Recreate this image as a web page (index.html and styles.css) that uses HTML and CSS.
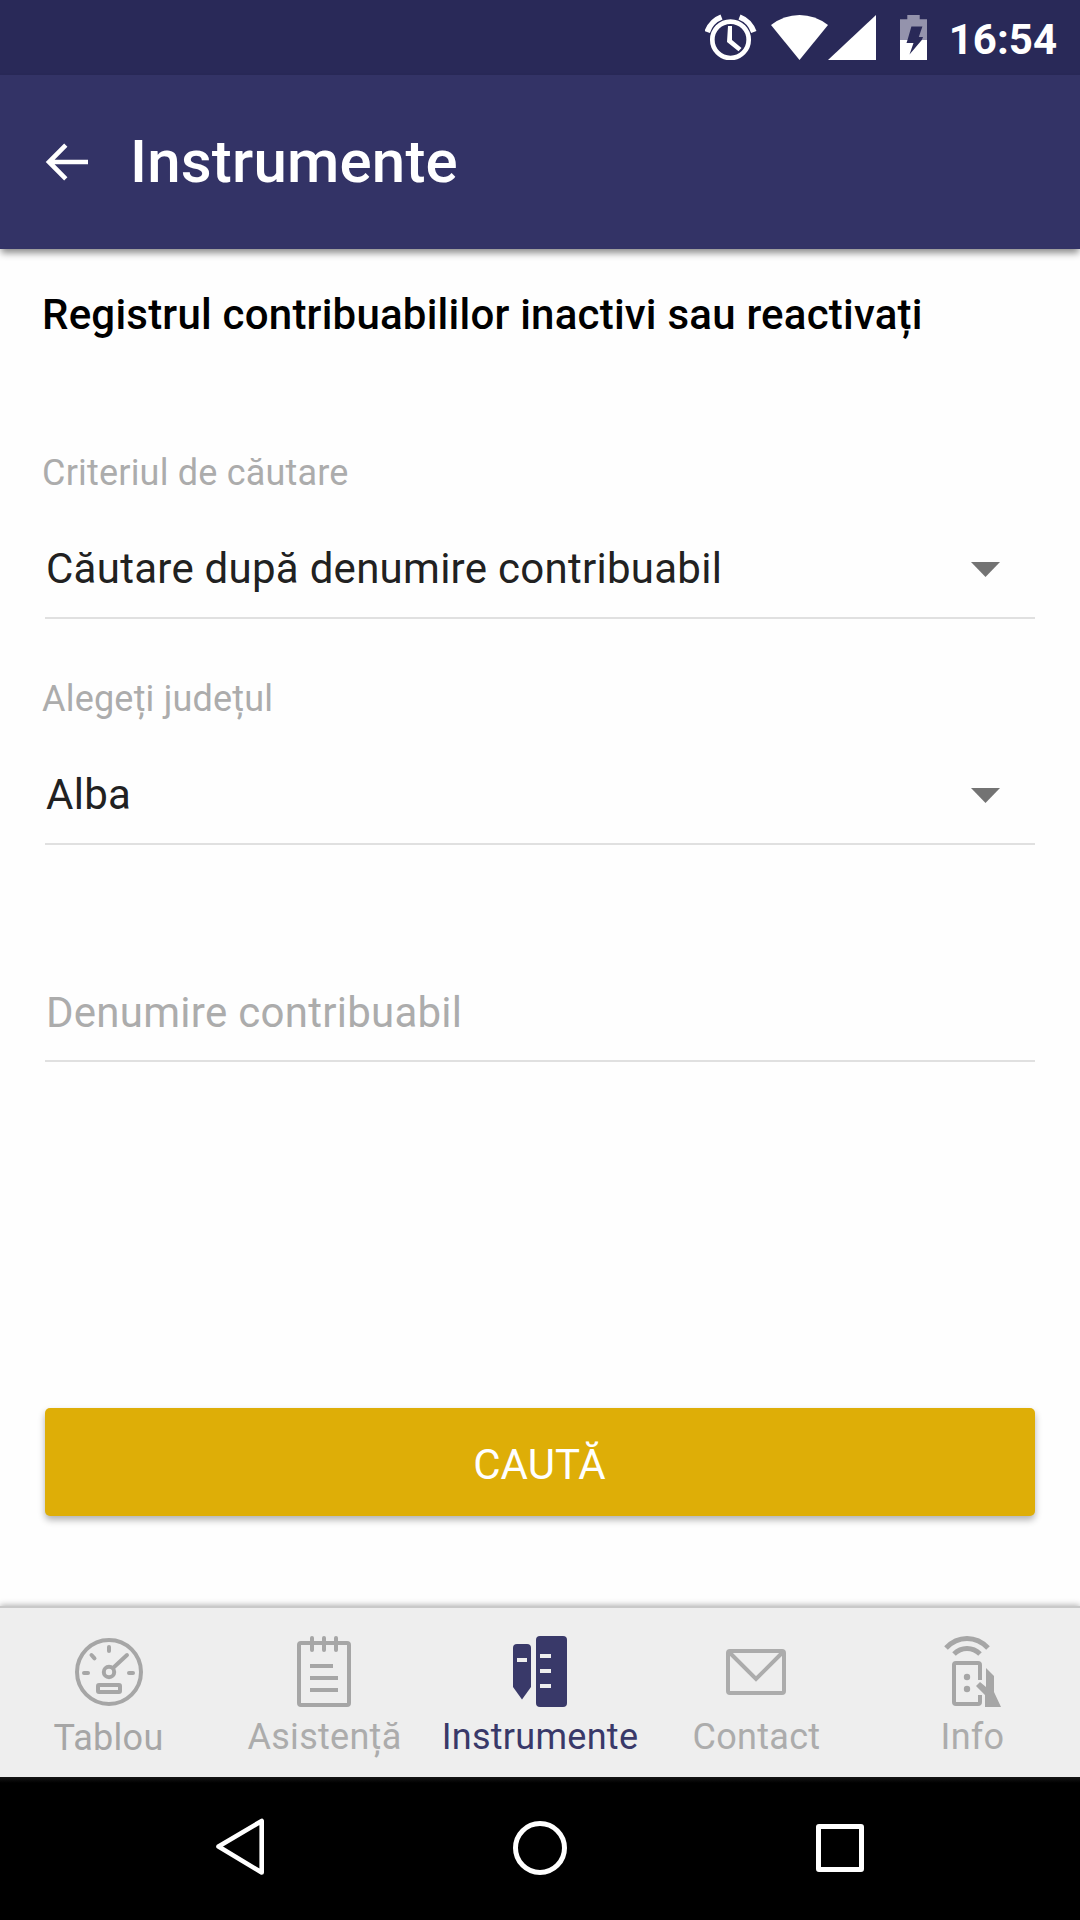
FILE: index.html
```html
<!DOCTYPE html>
<html lang="ro">
<head>
<meta charset="utf-8">
<title>Instrumente</title>
<link rel="stylesheet" href="styles.css">
</head>
<body>
<div class="status-bar">
  <svg class="status-icons" width="224" height="46" viewBox="705 14 224 46" aria-hidden="true">
    <circle cx="730.5" cy="39.8" r="18.2" fill="none" stroke="#fff" stroke-width="4.7"/>
    <path d="M728 26h4v14l9.500 8-3 3.200L727 42z" fill="#fff"/>
    <path d="M707.200 32Q711 21 721.500 17M753.800 32Q750 21 739.500 17" fill="none" stroke="#fff" stroke-width="5.600"/>
    <path d="M771 25Q784 15 799.500 15T828 25L799.500 60z" fill="#fff"/>
    <path d="M828 60h48V15z" fill="#fff"/>
    <path d="M900 40V19.300h7.300V15h12.400v4.300H927V40h-5.200l1.200-3h-4.200l3.600-10.500h-11L907.500 40z" fill="#9493ac"/>
    <path d="M900 40h7.500l-1 3h7l-4 11.500L921.800 40H927v20h-27z" fill="#fff"/>
  </svg>
  <span class="clock">16:54</span>
</div>
<header class="app-bar">
  <svg width="44" height="40" viewBox="45 142 44 40" aria-hidden="true">
    <path d="M88 162H49M65.800 145.200L49 162l16.800 16.800" fill="none" stroke="#fff" stroke-width="4.600"/>
  </svg>
  <h1 class="title">Instrumente</h1>
</header>
<main class="content">
  <h2 class="heading">Registrul contribuabililor inactivi sau reactivați</h2>
  <div class="label">Criteriul de căutare</div>
  <div class="field">
    <span>Căutare după denumire contribuabil</span>
    <svg class="caret" width="30" height="15" viewBox="0 0 30 15"><path d="M0 0h29L14.500 15z" fill="#737373"/></svg>
  </div>
  <div class="label">Alegeți județul</div>
  <div class="field">
    <span>Alba</span>
    <svg class="caret" width="30" height="15" viewBox="0 0 30 15"><path d="M0 0h29L14.500 15z" fill="#737373"/></svg>
  </div>
  <div class="field field-name"><span>Denumire contribuabil</span></div>
  <button class="search">CAUTĂ</button>
</main>
<nav class="tabs">
  <a class="tab tab-first">
    <svg width="76" height="80" viewBox="70 1632 76 80" fill="none" stroke="#a6a6a6" stroke-width="4" stroke-linecap="round">
      <circle cx="109" cy="1672" r="32"/>
      <circle cx="109" cy="1672" r="5.200"/>
      <path d="M113 1668l14-13M109 1647v4M91.500 1655l3 3.300M84 1673h4M129 1673h4"/>
      <rect x="98" y="1685" width="22" height="7" rx="1"/>
    </svg>
    <span>Tablou</span>
  </a>
  <a class="tab">
    <svg width="76" height="80" viewBox="286 1632 76 80" fill="none" stroke="#a6a6a6" stroke-width="4">
      <rect x="299" y="1643" width="50" height="62" rx="2"/>
      <path d="M312 1638v12M324 1638v12M336 1638v12" stroke-linecap="round"/>
      <path d="M310 1666h23M310 1678h28M310 1690h28"/>
    </svg>
    <span>Asistență</span>
  </a>
  <a class="tab tab-active">
    <svg width="76" height="80" viewBox="502 1632 76 80">
      <path d="M517 1644h10q4 0 4 4v39l-9 12.500-9-12.500v-39q0-4 4-4z" fill="#393969"/>
      <rect x="536" y="1636" width="31" height="71" rx="4" fill="#393969"/>
      <path d="M517 1660h10M540 1656h11M540 1671h11M540 1686h11" stroke="#eee" stroke-width="4"/>
    </svg>
    <span>Instrumente</span>
  </a>
  <a class="tab">
    <svg width="76" height="80" viewBox="718 1632 76 80" fill="none" stroke="#acacac" stroke-width="4">
      <rect x="728" y="1651" width="56" height="42" rx="2"/>
      <path d="M729 1652l27 27 27-27"/>
    </svg>
    <span>Contact</span>
  </a>
  <a class="tab">
    <svg width="76" height="80" viewBox="934 1632 76 80">
      <g fill="none" stroke="#a6a6a6">
        <path d="M946 1648Q955 1638.500 967 1638.500T988 1648" stroke-width="5"/>
        <path d="M954 1654Q959.500 1648.500 967 1648.500T980 1654" stroke-width="5"/>
        <path d="M980 1680v-15q0-2-2-2h-22q-2 0-2 2v37q0 2 2 2h22q2 0 2-2v-7" stroke-width="4"/>
      </g>
      <circle cx="967" cy="1677" r="3.200" fill="#a6a6a6"/>
      <circle cx="967" cy="1689" r="3.200" fill="#a6a6a6"/>
      <path d="M986 1668l8 8v16l7 15h-16v-12l-9-9 4-4 6 5z" fill="#a6a6a6"/>
    </svg>
    <span>Info</span>
  </a>
</nav>
<footer class="system-nav">
  <svg width="54" height="64" viewBox="213 1816 54 64"><path d="M261.700 1821v51.500L218.500 1846.500z" fill="none" stroke="#fff" stroke-width="4.600" stroke-linejoin="round"/></svg>
  <svg width="54" height="64" viewBox="513 1816 54 64"><circle cx="540" cy="1848" r="24.500" fill="none" stroke="#fff" stroke-width="5"/></svg>
  <svg width="54" height="64" viewBox="813 1816 54 64"><rect x="818.500" y="1826.500" width="43" height="43" rx=".5" fill="none" stroke="#fff" stroke-width="5"/></svg>
</footer>
</body>
</html>
```
FILE: styles.css
```css
* { box-sizing: border-box; }

body {
  width: 1080px;
  height: 1920px;
  margin: 0;
  display: flex;
  flex-direction: column;
  overflow: hidden;
  background: #fefefe;
  color: #212121;
  font: 400 42px/50px Roboto, sans-serif;
}

svg { display: block; flex: none; }

.status-bar {
  height: 75px;
  padding: 14px 23px 0 705px;
  display: flex;
  justify-content: space-between;
  background: #292958;
  color: #fff;
}
.clock {
  padding-top: 1px;
  font-weight: 700;
  white-space: nowrap;
}

.app-bar {
  position: relative;
  height: 174px;
  padding: 47px 0 0 45px;
  display: flex;
  gap: 41px;
  background: #333366;
  box-shadow: 0 5px 7px -1px rgba(0, 0, 0, .45);
  color: #fff;
}
.app-bar svg { margin-top: 20px; }
.title {
  margin: 0;
  font-size: 60px;
  line-height: 80px;
  font-weight: 500;
  letter-spacing: .2px;
}

.content {
  flex: 1;
  padding: 41px 45px 0;
  display: flex;
  flex-direction: column;
}
.heading {
  margin: 0 0 110px -3px;
  font-size: 42px;
  line-height: 50px;
  font-weight: 500;
  letter-spacing: .22px;
  color: #000;
}
.label {
  margin-left: -3px;
  height: 44px;
  padding-top: 1px;
  font-size: 36px;
  line-height: 44px;
  letter-spacing: .2px;
  color: #acacac;
}
.field {
  height: 125px;
  margin-bottom: 57px;
  padding: 50px 34px 0 1px;
  display: flex;
  justify-content: space-between;
  border-bottom: 2px solid #e0e0e0;
  letter-spacing: .27px;
}
.caret { margin-top: 18px; }
.field-name {
  margin: 35px 0 346px;
  padding-top: 51px;
  color: #acacac;
}
.search {
  height: 108px;
  padding: 5px 1px 0 0;
  border: 0;
  border-radius: 5px;
  background: #deae07;
  box-shadow: 0 4px 7px rgba(0, 0, 0, .3);
  color: #fff;
  font: inherit;
}

.tabs {
  height: 171px;
  padding-top: 24px;
  display: grid;
  grid-template-columns: repeat(5, 1fr);
  border-top: 2px solid #c9c9c9;
  background: #eee;
  box-shadow: 0 -1px 6px rgba(0, 0, 0, .3);
}
.tab {
  display: flex;
  flex-direction: column;
  align-items: center;
  font-size: 36px;
  line-height: 44px;
  letter-spacing: .28px;
  color: #acacac;
}
.tab span {
  margin-top: 3px;
  padding-left: 1px;
}
.tab-first { color: #a6a6a6; }
.tab-first span { margin-top: 4px; }
.tab-active { color: #393969; }
.tab-active span { padding-left: 0; }

.system-nav {
  height: 143px;
  padding: 39px 213px 0;
  display: flex;
  justify-content: space-between;
  background: linear-gradient(#161616, #000 6px);
}
```
